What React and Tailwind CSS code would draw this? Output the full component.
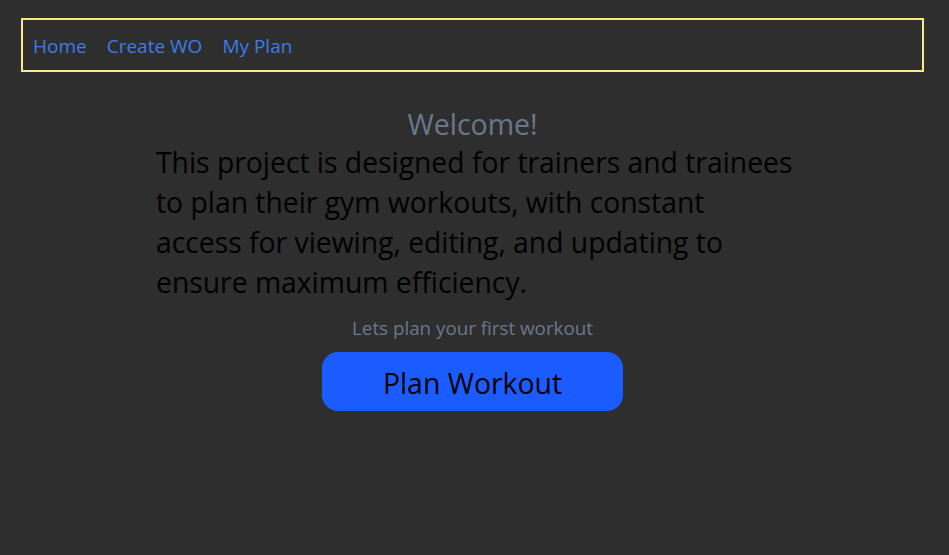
export default function App() {
  return (
    <div className="min-h-[555px] w-full bg-[#2e2e2e] pt-[18px] pl-[21px] pr-[25px]" style={{ fontFamily: '"Open Sans", "Noto Sans", sans-serif' }}>
      <nav className="flex h-[54px] items-center gap-[20px] border-2 border-[#fde68a] px-[10px] pt-[2px]">
        <a className="text-[19px] text-[#3b7ce8]">Home</a>
        <a className="text-[19px] text-[#3b7ce8]">Create WO</a>
        <a className="text-[19px] text-[#3b7ce8]">My Plan</a>
      </nav>
      <main className="flex flex-col items-center pt-[33px]">
        <h1 className="text-[28.5px] leading-[38px] text-[#6b778c]">Welcome!</h1>
        <p className="-mt-[1px] ml-[5px] w-[638px] text-[28.3px] leading-[40px] text-black">
          This project is designed for trainers and trainees to plan their gym workouts, with constant access for viewing, editing, and updating to ensure maximum efficiency.
        </p>
        <p className="mt-[14px] text-[18.8px] leading-[24px] text-[#6b778c]">Lets plan your first workout</p>
        <button className="mt-[12px] h-[59px] w-[301px] rounded-[16px] bg-[#1a5cff] pt-[3px] text-[28.4px] leading-[40px] text-black">Plan Workout</button>
      </main>
    </div>
  );
}
